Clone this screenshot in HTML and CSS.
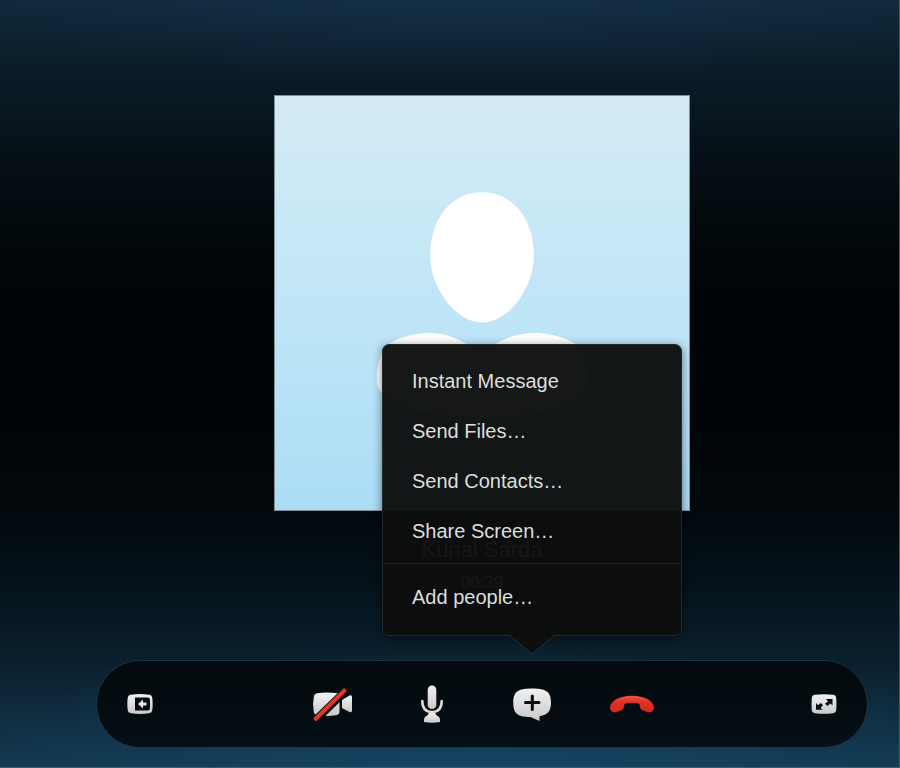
FILE: index.html
```html
<!DOCTYPE html>
<html lang="en">
<head>
<meta charset="utf-8">
<meta name="viewport" content="width=device-width, initial-scale=1">
<title>Call with Kunal Sarda</title>
<link rel="stylesheet" href="styles.css">
</head>
<body>
<svg class="defs" width="0" height="0" aria-hidden="true">
  <defs>
    <linearGradient id="silver" x1="0" y1="0" x2="0" y2="1">
      <stop offset="0" stop-color="#f2f2f2"/>
      <stop offset="1" stop-color="#c8c8c8"/>
    </linearGradient>
    <linearGradient id="red" x1="0" y1="0" x2="0" y2="1">
      <stop offset="0" stop-color="#ee5545"/>
      <stop offset="0.4" stop-color="#e03024"/>
      <stop offset="1" stop-color="#d8281e"/>
    </linearGradient>
  </defs>
</svg>
<div class="call">
  <main class="stage">
    <svg class="avatar" viewBox="0 0 415 415" role="img" aria-label="Kunal Sarda">
      <path fill="#fff" d="M207.500 96.500C240 96.500 259.500 125 259.500 160C259.500 190 236 227 207.500 227S155.500 190 155.500 160C155.500 125 175 96.500 207.500 96.500Z"/>
      <path fill="#fff" d="M102 285C102 266 107 253 116 247C130 240 143 237.500 155 237.500C172 237.500 184 243 203 255H212C227 243 243 237.500 260 237.500C272 237.500 285 240 299 247C308 253 313 266 313 285C313 308 270 322 207.500 322S102 308 102 285Z"/>
    </svg>
    <h1 class="name">Kunal Sarda</h1>
    <p class="time">00:39</p>
  </main>
  <footer class="bar">
    <button class="tool tool-end" type="button" aria-label="Show sidebar">
      <svg width="26" height="20" viewBox="0 0 26 20">
        <path fill="url(#silver)" d="M4 .8Q13-.6 22 .8Q25 1.200 25.300 4Q26 10 25.300 16Q25 18.800 22 19.200Q13 20.600 4 19.200Q1 18.800 .7 16Q0 10 .7 4Q1 1.200 4 .8Z"/>
        <path fill="#050d12" d="M8 3.500H21Q22.700 3.500 22.900 5.500Q23.300 10 22.900 14.500Q22.700 16.500 21 16.500H8Z"/>
        <path fill="#e4e4e4" d="M11 10L16 5.500V8.500H19.500V11.500H16V14.500Z"/>
      </svg>
    </button>
    <div class="group">
      <button class="tool" type="button" aria-label="Turn video on">
        <svg width="44" height="36" viewBox="0 0 44 36">
          <path fill="url(#silver)" d="M7 7.300Q16 6 26 7.100Q29.500 7.500 29.500 11V25.500Q29.500 28.800 26 29.300Q16 30.500 7 29.300Q4.300 28.800 3.800 26Q2.300 18 3.800 11Q4.300 7.800 7 7.300Z"/>
          <path fill="url(#silver)" d="M32 14L39.500 9.600Q42 8.500 42 11V24.500Q42 27 39.500 26L32 22Z"/>
          <path stroke="#050d12" stroke-width="8" d="M3 36.500L36 4.500"/>
          <path stroke="#e23628" stroke-width="4" d="M4.500 34L35.500 3.500"/>
        </svg>
      </button>
      <button class="tool" type="button" aria-label="Mute microphone">
        <svg width="24" height="40" viewBox="0 0 24 40">
          <path fill="url(#silver)" d="M9 28.500H15Q15.500 31.500 18.500 32.500Q20.500 34 20 38Q12 39.500 4 38Q3.500 34 5.500 32.500Q8.500 31.500 9 28.500Z"/>
          <path fill="none" stroke="#dcdcdc" stroke-width="2.500" stroke-linecap="round" d="M2.300 17Q2.300 28 12 28T21.700 17"/>
          <rect x="7.700" y="1.500" width="8.600" height="23.500" rx="4.300" fill="url(#silver)"/>
        </svg>
      </button>
      <div class="anchor">
        <button class="tool" type="button" aria-label="More actions" aria-expanded="true" aria-controls="actions">
          <svg width="40" height="36" viewBox="0 0 40 36">
            <path fill="url(#silver)" d="M20 2.500C34 2.500 39 5.500 39 16.500C39 25 36 29 27.500 30.200V35L18.500 31C5 31 1.300 27 1.300 16.500C1.300 5.500 6 2.500 20 2.500Z"/>
            <path fill="none" stroke="#050d12" stroke-width="3" stroke-linecap="round" d="M20.300 10V23.500M13.500 16.600H27"/>
          </svg>
        </button>
        <div class="menu" id="actions">
          <ul class="list">
            <li><button class="item" type="button">Instant Message</button></li>
            <li><button class="item" type="button">Send Files…</button></li>
            <li><button class="item" type="button">Send Contacts…</button></li>
            <li><button class="item" type="button">Share Screen…</button></li>
          </ul>
          <ul class="list list-more">
            <li><button class="item" type="button">Add people…</button></li>
          </ul>
          <svg class="arrow" width="46" height="20" viewBox="0 0 46 20" aria-hidden="true">
            <path fill="#0d0f0f" d="M0 0H46L23 19L0 0Z"/>
            <path fill="none" stroke="#2b3237" d="M0 0L23 19L46 0"/>
          </svg>
        </div>
      </div>
      <button class="tool" type="button" aria-label="End call">
        <svg width="46" height="20" viewBox="0 0 46 20">
          <path fill="url(#red)" d="M1 13C2 7 10 1.800 23 1.800S44 7 45 13C45 17 42 19 38.500 18L33 16C30.500 15 31.500 11 30 9.800Q23 7.600 16 9.800C14.500 11 15.500 15 13 16L7.500 18C4 19 1 17 1 13Z"/>
        </svg>
      </button>
    </div>
    <button class="tool tool-end" type="button" aria-label="Full screen">
      <svg width="26" height="20" viewBox="0 0 26 20">
        <path fill="url(#silver)" d="M4 .8Q13-.4 22 .8Q25 1.200 25.200 4Q25.700 10 25.200 16Q25 18.800 22 19.200Q13 20.400 4 19.200Q1 18.800 .8 16Q.3 10 .8 4Q1 1.200 4 .8Z"/>
        <path fill="#050d12" d="M15 5H21.500V11.500L19.500 9.600L16.500 12L14 9.800L17 7.200Z"/>
        <path fill="#050d12" d="M5 9V15.800H11.500L9.600 13.800L12 11.300L9.800 9L7 11.200Z"/>
      </svg>
    </button>
  </footer>
</div>
</body>
</html>
```
FILE: styles.css
```css
* {
  box-sizing: border-box;
}

body {
  margin: 0;
  background: #000406;
  color: #fff;
  font-family: "Liberation Sans", Arial, sans-serif;
}

.defs {
  position: absolute;
}

.call {
  display: flex;
  flex-direction: column;
  justify-content: space-between;
  min-height: 100vh;
  padding: 95px 31px 19px 96px;
  border-right: 1px solid #45586a;
  border-bottom: 1px solid #45586a;
  background:
    radial-gradient(ellipse 60% 10% at 52% 0, rgba(26, 58, 92, 0.4), transparent),
    radial-gradient(ellipse 60% 16% at 54% 100%, rgba(24, 84, 124, 0.45), transparent),
    linear-gradient(#10283a 0, #0a1a24 11%, #050f15 22%, #010608 34%, #000406 40%, #000406 54%, #02080c 65%, #05121a 76%, #0b2130 87%, #14384f 100%);
}

.stage {
  display: flex;
  flex-direction: column;
  align-items: center;
}

.avatar {
  width: 100%;
  max-width: 416px;
  border: 1px solid #7d919c;
  background: linear-gradient(#d4eaf6, #c8e8f5 30%, #bde4f7 58%, #abddf5);
}

.name {
  margin: 26px 0 0;
  font-size: 22px;
  font-weight: 400;
  line-height: 26px;
}

.time {
  margin: 10px 0 0;
  font-size: 17px;
  line-height: 20px;
}

.bar {
  display: flex;
  justify-content: space-between;
  border: 1px solid #1b3442;
  border-radius: 44px;
  background: linear-gradient(#03090c, #050f16);
}

.group {
  display: flex;
}

.tool {
  display: flex;
  align-items: center;
  justify-content: center;
  width: 100px;
  height: 86px;
  padding: 0;
  border: 0;
  background: none;
}

.tool-end {
  width: 86px;
}

.anchor {
  position: relative;
}

.menu {
  position: absolute;
  bottom: calc(100% + 25px);
  left: 50%;
  width: 300px;
  margin-left: -150px;
  padding: 11px 1px 13px;
  border: 1px solid #24292c;
  border-radius: 7px;
  background: rgba(13, 14, 14, 0.96);
  box-shadow: 0 2px 10px rgba(0, 0, 0, 0.5);
}

.list {
  margin: 0;
  padding: 0;
  list-style: none;
}

.list-more {
  margin-top: 7px;
  padding-top: 8px;
  border-top: 1px solid #202322;
}

.item {
  display: block;
  width: 100%;
  height: 50px;
  padding: 0 28px;
  border: 0;
  background: none;
  color: #dedede;
  font: 20px/24px "Liberation Sans", Arial, sans-serif;
  text-align: left;
}

.arrow {
  position: absolute;
  top: 100%;
  left: 50%;
  margin-left: -23px;
}
```
